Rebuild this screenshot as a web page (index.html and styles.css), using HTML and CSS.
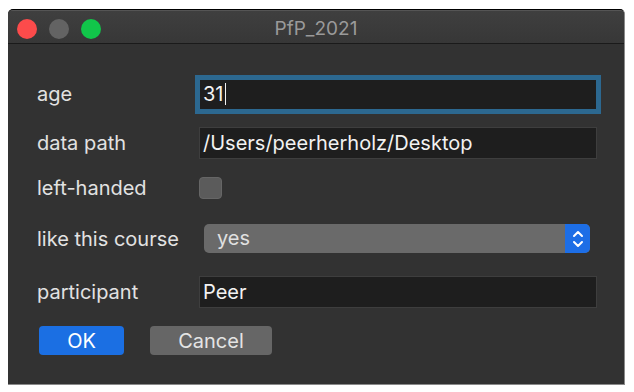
FILE: index.html
```html
<!DOCTYPE html>
<html lang="en">
  <head>
    <meta charset="UTF-8" />
    <meta name="viewport" content="width=device-width, initial-scale=1.0" />
    <title>PfP_2021</title>
    <link rel="stylesheet" href="styles.css">
  </head>
  <body>
    <div class="window">
      <div class="titlebar">
        <div class="lights">
          <span class="light close"></span>
          <span class="light minimize"></span>
          <span class="light zoom"></span>
        </div>
        <div class="title">PfP_2021</div>
      </div>

      <div class="dialog">
        <div class="label">age</div>
        <div class="field focused">31<span class="caret"></span></div>

        <div class="label">data path</div>
        <div class="field">/Users/peerherholz/Desktop</div>

        <div class="label">left-handed</div>
        <div class="check"></div>

        <div class="label">like this course</div>
        <div class="popup">
          <span class="popup-value">yes</span>
          <span class="popup-arrows">
            <svg width="12" height="22" viewBox="0 0 12 22">
              <path d="M2 8 L6 4 L10 8" />
              <path d="M2 14 L6 18 L10 14" />
            </svg>
          </span>
        </div>

        <div class="label">participant</div>
        <div class="field">Peer</div>

        <div class="buttons">
          <button class="btn ok">OK</button>
          <button class="btn cancel">Cancel</button>
        </div>
      </div>
    </div>
  </body>
</html>
```

FILE: styles.css
```css
body {
  margin: 0;
  background: #fff;
  font-family: Inter, "Liberation Sans", sans-serif;
}

.window {
  margin: 9px 0 0 8px;
  width: 617px;
  height: 376px;
  box-sizing: border-box;
  background: #323232;
  border-top: 1px solid #000;
  border-right: 1px solid #8a8a8a;
  border-bottom: 1px solid #8a8a8a;
  border-radius: 5px 5px 0 0;
  overflow: hidden;
}

.titlebar {
  display: grid;
  grid-template-columns: 1fr auto 1fr;
  align-items: center;
  height: 34px;
  box-sizing: border-box;
  padding-top: 3px;
  background: linear-gradient(#3f3f3f, #373737);
  border-top: 1px solid #555;
  border-bottom: 1px solid #1a1a1a;
}

.lights {
  display: flex;
  gap: 12px;
  padding-left: 9px;
}

.light {
  width: 20px;
  height: 20px;
  border-radius: 50%;
}

.close {
  background: #fc4b4b;
}

.minimize {
  background: #636363;
}

.zoom {
  background: #11c64a;
}

.title {
  color: #9a9a9a;
  font-size: 19px;
}

.dialog {
  display: grid;
  grid-template-columns: 162px 398px;
  grid-template-rows: 48px 50px 40px 61px 45px 53px;
  align-items: center;
  padding: 26px 0 0 29px;
  font-size: 20px;
  color: #e2e2e2;
}

.field {
  display: flex;
  align-items: center;
  height: 32px;
  box-sizing: border-box;
  padding-left: 3px;
  background: #1e1e1e;
  border: 1px solid #3e3e3e;
  color: #f2f2f2;
}

.focused {
  box-shadow: 0 0 0 4px #2c6890;
  border-color: #2c6890;
  height: 31px;
}

.caret {
  width: 1px;
  height: 22px;
  margin-left: 1px;
  background: #f2f2f2;
}

.check {
  width: 23px;
  height: 22px;
  box-sizing: border-box;
  border-radius: 4px;
  background: #5b5b5b;
  border: 1px solid #666;
}

.popup {
  display: flex;
  height: 29px;
  margin: 0 7px 0 5px;
  border-radius: 5px;
  background: #6a6a6a;
  overflow: hidden;
}

.popup-value {
  flex: 1;
  padding-left: 13px;
  line-height: 29px;
  color: #e0e0e0;
}

.popup-arrows {
  display: flex;
  align-items: center;
  justify-content: center;
  width: 25px;
  background: #1d6ee6;
}

.popup-arrows path {
  fill: none;
  stroke: #fff;
  stroke-width: 2;
  stroke-linecap: round;
  stroke-linejoin: round;
}

.buttons {
  grid-column: 1 / 3;
  display: flex;
  gap: 26px;
  padding-left: 2px;
}

.btn {
  height: 29px;
  border: none;
  border-radius: 4px;
  font-family: Inter, "Liberation Sans", sans-serif;
  font-size: 20px;
  padding: 0;
}

.ok {
  width: 85px;
  background: #1b6fe3;
  color: #fff;
}

.cancel {
  width: 122px;
  background: #666;
  color: #e4e4e4;
}
```
